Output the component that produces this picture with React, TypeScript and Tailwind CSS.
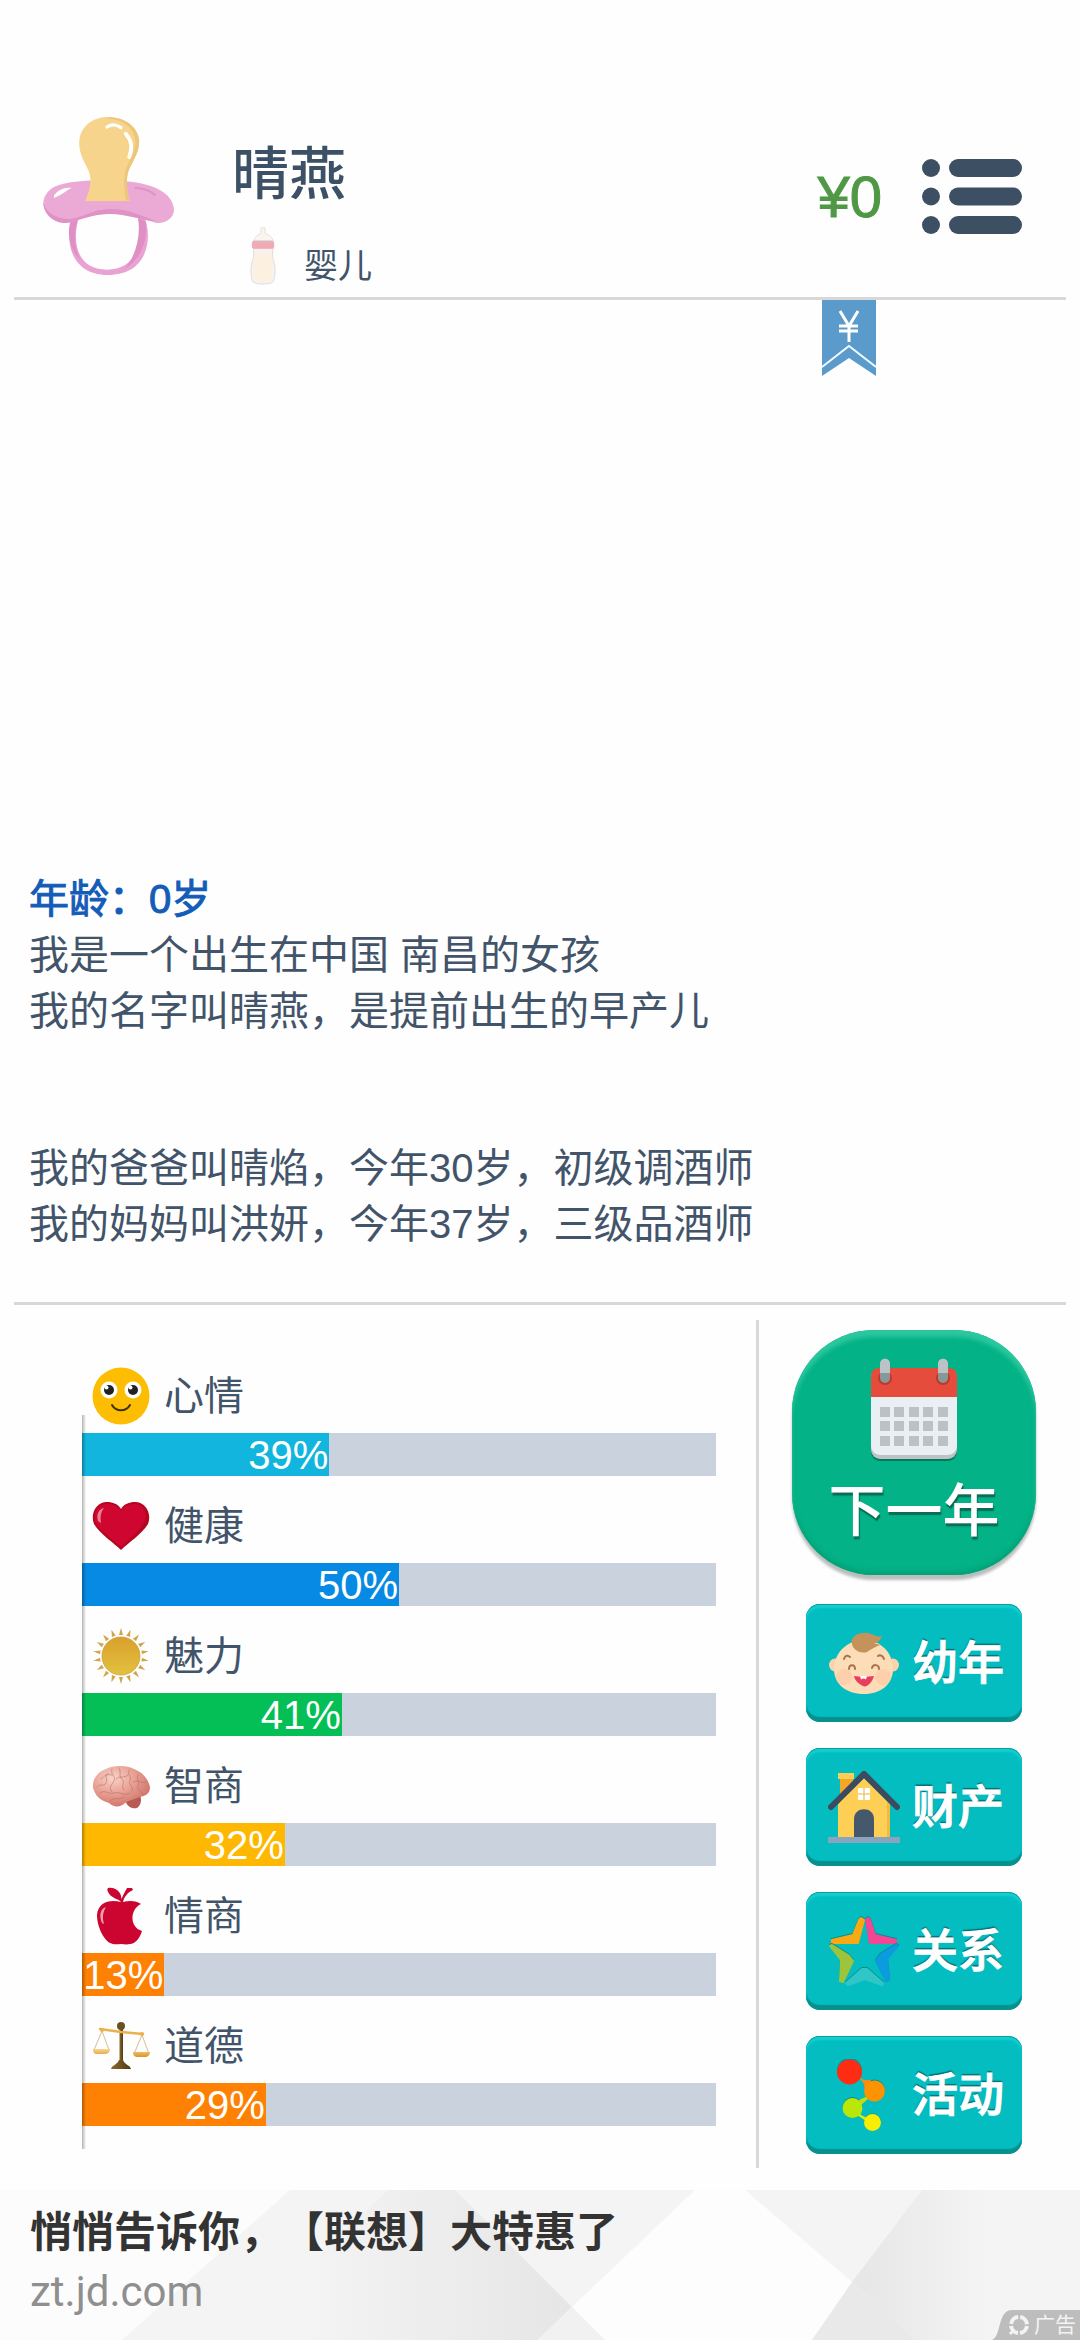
import type { ReactNode } from "react";

function Pacifier() {
  return (
    <svg viewBox="0 0 380 474" preserveAspectRatio="none" className="h-[158px] w-[131px]" aria-hidden="true">
      <path d="M92 296C60 350 70 474 188 474C312 474 318 350 292 296L270 288C296 350 282 458 186 458C90 458 84 360 106 296Z" fill="#e9a3d2" />
      <path d="M84 300C64 350 80 400 110 432C88 390 88 340 104 300Z" fill="#e08fc4" />
      <path d="M298 312C306 370 282 430 236 456C268 420 284 360 276 304Z" fill="#e08fc4" />
      <path d="M60 200C110 186 250 184 310 206C356 220 380 250 380 280C378 308 350 322 326 317C290 308 240 288 190 290C130 292 92 318 60 318C22 314 0 284 1 254C6 222 30 206 60 200Z" fill="#eba9d5" />
      <path d="M1 256C10 292 50 312 90 304C130 294 140 280 190 276C250 274 290 300 330 312C300 314 240 290 190 291C130 292 92 318 60 318C22 314 0 284 1 256Z" fill="#df92c6" />
      <path d="M122 252C140 212 144 180 126 148C110 118 102 90 106 66C112 24 148 0 190 0C240 2 276 30 279 72C280 110 254 140 246 168C240 200 244 226 252 252Z" fill="#f7d48c" />
      <path d="M190 6C236 8 264 34 268 72C268 110 244 138 238 166C232 200 238 228 240 250L252 252C244 226 240 200 246 168C254 140 280 110 279 72C276 30 240 2 190 0Z" fill="#eec679" />
      <path d="M186 30C200 20 216 24 226 32" fill="none" stroke="#fff" strokeWidth="10" strokeLinecap="round" />
      <path d="M240 50C256 68 260 94 250 120" fill="none" stroke="#fff" strokeWidth="11" strokeLinecap="round" />
      <path d="M34 236C40 224 58 214 76 214C64 222 52 232 34 240Z" fill="#fff" stroke="#fff" strokeWidth="4" />
      <path d="M268 212C290 214 314 222 324 234" fill="none" stroke="#df92c6" strokeWidth="6" strokeLinecap="round" />
    </svg>
  );
}

function Bottle() {
  return (
    <svg viewBox="0 0 26 60" className="h-[58px] w-[26px]" aria-hidden="true">
      <path d="M11 1C12-0 14-0 15 1L15.500 7C20 8 23 11 23.500 15H3C4 11 7 8 10.500 7Z" fill="#fbf5ef" stroke="#e3dad6" strokeWidth=".8" />
      <path d="M3 22H23.500C23 28 22 30 24 35C26 42 26 50 24 56C22 60 4 60 2 56C0 50 0 42 2 35C4 30 3.500 28 3 22Z" fill="#f7f2ee" stroke="#dbd5d4" strokeWidth=".8" />
      <path d="M5 28H21C21 33 23 37 22.500 43C22.500 50 22 54 20 55C16 56 9 56 6 55C4 53 4 49 4 43C4 37 5 33 5 28Z" fill="#fcf1df" />
      <rect x="1.500" y="14.500" width="23" height="8" rx="2" fill="#f3a9b3" />
      <rect x="2.500" y="14" width="21" height="2" rx="1" fill="#d9b9bd" />
    </svg>
  );
}

function MenuIcon() {
  return (
    <svg viewBox="0 0 100 75" className="h-[75px] w-[100px]" fill="#3c4f63" aria-hidden="true">
      {[0, 28.500, 57].map((y) => (
        <g key={y}>
          <circle cx="9" cy={y + 9} r="9" />
          <rect x="27" y={y} width="73" height="18" rx="9" />
        </g>
      ))}
    </svg>
  );
}

function Ribbon() {
  return (
    <svg viewBox="0 0 54 76" className="h-[76px] w-[54px]" aria-hidden="true">
      <path d="M0 0H54V76L27 58L0 76Z" fill="#5b9bcb" />
      <path d="M0 67L27 46L54 67" fill="none" stroke="#f2faff" strokeWidth="2" />
      <path d="M18 11L27 26L36 11M27 25V42M17 26H36M17 31H36" fill="none" stroke="#fff" strokeWidth="3" />
    </svg>
  );
}

const iconClass = "size-[58px]";

function Smile() {
  return (
    <svg viewBox="0 0 58 58" className={iconClass} aria-hidden="true">
      <circle cx="29" cy="29" r="28.500" fill="#fdbd02" />
      <circle cx="17" cy="23" r="8.500" fill="#fff" />
      <circle cx="41" cy="23" r="8.500" fill="#fff" />
      <circle cx="17" cy="23" r="5" fill="#222" />
      <circle cx="41" cy="23" r="5" fill="#222" />
      <circle cx="14.500" cy="20.500" r="2" fill="#fff" />
      <circle cx="38.500" cy="20.500" r="2" fill="#fff" />
      <path d="M20 38C24 45 34 45 38 38" fill="none" stroke="#3c3100" strokeWidth="2" strokeLinecap="round" />
    </svg>
  );
}

function Heart() {
  return (
    <svg viewBox="0 0 58 58" className={iconClass} aria-hidden="true">
      <path d="M29 53C22 46 8 37 2 27C-2 17 4 5 15 5C21 5 26 7 29 12C32 7 37 5 43 5C54 5 60 17 56 27C50 37 36 46 29 53Z" fill="#b70520" />
      <path d="M29 50C22 43 9 35 4 26C0 17 6 7 15 7C21 7 26 9 29 14C32 9 37 7 42 7C50 7 55 14 53 23C48 35 36 43 29 50Z" fill="#cf0730" />
      <path d="M6 24C4 17 7 12 12 11C9 15 8 19 9 26Z" fill="#ed7d92" />
    </svg>
  );
}

function Sun() {
  return (
    <svg viewBox="0 0 58 58" className={iconClass} aria-hidden="true">
      <defs>
        <linearGradient id="sun" x1="0" y1="0" x2="0" y2="1">
          <stop offset="0" stopColor="#d9a02c" />
          <stop offset="1" stopColor="#e3c23e" />
        </linearGradient>
      </defs>
      {Array.from({ length: 18 }, (_, i) => (
        <path key={i} d="M29 1L31 8H27Z" fill="#cfa548" transform={`rotate(${i * 20} 29 29)`} />
      ))}
      <circle cx="29" cy="29" r="19" fill="url(#sun)" stroke="#c99b37" strokeWidth=".8" />
    </svg>
  );
}

function Brain() {
  return (
    <svg viewBox="0 0 58 58" className={iconClass} aria-hidden="true">
      <defs>
        <radialGradient id="brain" cx=".35" cy=".3" r=".75">
          <stop offset="0" stopColor="#f8d3c9" />
          <stop offset=".5" stopColor="#e8a194" />
          <stop offset="1" stopColor="#cf7268" />
        </radialGradient>
      </defs>
      <path d="M33 43L48 38C50 43 49 48 45 51C40 52 35 50 33 43Z" fill="#b85a52" />
      <path d="M1 31C0 20 8 14 14 12C20 8 36 8 42 12C50 15 56 21 58 30C58 37 53 39 48 40C43 42 38 43 33 46C29 50 22 51 17 46C12 44 5 43 1 31Z" fill="url(#brain)" />
      <path d="M5 30C8 26 12 30 14 26C16 22 12 19 16 16M20 12C18 18 24 18 22 24C20 28 16 30 20 35M27 11C30 15 26 20 30 22C34 25 28 29 32 33M37 13C35 18 40 19 38 24C36 28 42 29 40 34M46 18C43 22 49 24 46 29C44 33 50 34 51 37M8 36C13 32 17 38 22 36C28 34 32 40 38 36M18 44C22 39 27 44 32 40M24 22C28 18 31 22 36 18M9 22C13 20 12 16 20 18M41 25C45 22 50 27 54 25M38 48L45 42M42 50L47 45" fill="none" stroke="#b9665c" strokeWidth="1" strokeLinecap="round" opacity=".55" />
    </svg>
  );
}

function Apple() {
  return (
    <svg viewBox="0 0 58 58" className={iconClass} aria-hidden="true">
      <path d="M29 15C27 12 22 12 18 8C15 4 15 2 16 1C23 0 29 4 29.500 12C32 6 34 3 35 1L40 1L41 3C36 5 32 10 31 15C38 13 45 14 49 17C38 22 37 40 50 44C48 51 43 57 38 57C34 58 32 57 29 57C25 57 22 58 18 56C12 53 5 40 5 28C6 15 18 12 29 15Z" fill="#cc0530" />
      <path d="M10 36C7 29 8 22 14 20C11 25 10 30 12 37Z" fill="#f0a0ae" />
    </svg>
  );
}

function Scales() {
  return (
    <svg viewBox="0 0 58 58" className={iconClass} aria-hidden="true">
      <defs>
        <linearGradient id="stand" x1="0" y1="0" x2="1" y2="0">
          <stop offset="0" stopColor="#8d6a2c" />
          <stop offset="1" stopColor="#4e3a14" />
        </linearGradient>
        <linearGradient id="pan" x1="0" y1="0" x2="0" y2="1">
          <stop offset="0" stopColor="#f8d692" />
          <stop offset="1" stopColor="#d99422" />
        </linearGradient>
      </defs>
      <path d="M10 14L2 33M10 14L17 33M50 18L42 37M50 18L57 37" stroke="#d8bd93" strokeWidth="1" fill="none" />
      <rect x="27.500" y="11" width="3.500" height="34" fill="url(#stand)" />
      <path d="M8 12L29 15L51 17" stroke="#e9b24e" strokeWidth="2.500" fill="none" strokeLinecap="round" />
      <circle cx="10" cy="13" r="2" fill="#e9b24e" />
      <circle cx="50" cy="17" r="2" fill="#e9b24e" />
      <path d="M1 32H18C18 36 15 37 13 37H5C2 37 1 35 1 32ZM41 35H58C58 39 55 40 53 40H46C43 40 41 39 41 35Z" fill="url(#pan)" />
      <circle cx="29" cy="9" r="4" fill="#6b5020" />
      <path d="M19 52C20 48 25 48 27 43H31C33 48 38 48 39 52Z" fill="url(#stand)" />
    </svg>
  );
}

function Calendar() {
  return (
    <svg viewBox="0 0 88 104" className="h-[104px] w-[88px]" aria-hidden="true">
      <rect x="1" y="13" width="86" height="90" rx="9" fill="#06795d" />
      <rect x="1" y="11" width="86" height="90" rx="9" fill="#bcc2c6" />
      <rect x="1" y="11" width="86" height="86" rx="9" fill="#eaeff3" />
      <path d="M1 39V19C1 13 4 10 10 10H78C84 10 87 13 87 19V39Z" fill="#e64c3c" />
      {[15, 73].map((x) => (
        <g key={x}>
          <circle cx={x} cy="20" r="7" fill="#b93a2e" />
          <rect x={x - 5} y="1" width="10" height="24" rx="5" fill="#8a9799" />
          <path d={`M${x - 5} 15V6C${x - 5} -1 ${x + 5} -1 ${x + 5} 6V15Z`} fill="#bcc3c8" />
        </g>
      ))}
      {[49, 63, 78].map((y) =>
        [10, 24, 39, 53, 68].map((x) => <rect key={`${x}-${y}`} x={x} y={y} width="10" height="10" fill="#bcc1c4" />),
      )}
    </svg>
  );
}

const actionIcon = "size-[72px] shrink-0";

function Baby() {
  return (
    <svg viewBox="0 0 72 72" className={actionIcon} aria-hidden="true">
      <ellipse cx="7" cy="38" rx="6" ry="6.500" fill="#fbd2ab" />
      <ellipse cx="65" cy="38" rx="6" ry="6.500" fill="#fbd2ab" />
      <path d="M36 13C53 13 65 26 65 42C65 57 53 67 36 67C18 67 6 57 6 42C6 26 19 13 36 13Z" fill="#fddcb8" />
      <circle cx="16" cy="50" r="8" fill="#fcc9a4" opacity=".7" />
      <circle cx="55" cy="50" r="8" fill="#fcc9a4" opacity=".7" />
      <path d="M24 17C22 8 32 5 40 6C45 7 49 11 54 9C52 15 48 16 46 16L52 18C47 20 43 22 39 25C32 27 25 23 24 17Z" fill="#c4925b" />
      <path d="M16 32C17 28 20 28 22 30M50 29C52 27 55 29 56 32M21 42C21 37 27 37 27 42M44 41C45 37 51 37 51 42" fill="none" stroke="#a8744e" strokeWidth="2" strokeLinecap="round" />
      <path d="M26 49C31 50 40 50 46 49C44 56 38 61 35 59C31 57 27 54 26 49Z" fill="#e93e5e" />
      <path d="M32 49H39L38 52.500C36 51 35 51 33 52.500Z" fill="#fff" />
    </svg>
  );
}

function House() {
  return (
    <svg viewBox="0 0 72 72" className={actionIcon} aria-hidden="true">
      <path d="M12 4H25V22L12 32Z" fill="#f3a62a" />
      <path d="M10 2H26V8H10Z" fill="#fccf54" />
      <path d="M10 33L36 7L62 33V67H10Z" fill="#fecf55" />
      <path d="M53 24L62 33V67H59V30Z" fill="#f0b940" />
      <path d="M3 36L36 3L69 36" fill="none" stroke="#3c4c60" strokeWidth="6" strokeLinecap="round" />
      <rect x="30" y="17" width="12" height="12" rx="1" fill="#fff" />
      <path d="M36 17V29M30 23H42" stroke="#f1cc76" strokeWidth="1.500" />
      <path d="M26 67V48C26 35 46 35 46 48V67Z" fill="#46586b" />
      <path d="M0 66H72V72H0Z" fill="#8aa4bf" />
    </svg>
  );
}

const starArms = [
  { d: "M31 5L25 20L4 25V28H30L36 5L33 3Z", color: "#f7aa14" },
  { d: "M38 5L42 28H68V25L47 20L42 5L40 3Z", color: "#f34795" },
  { d: "M2 31L13 45L12 66L15 67L25 46L20 40L4 30Z", color: "#9cc43c" },
  { d: "M70 31L59 44L61 65L58 66L48 46L52 40L68 30Z", color: "#0d9be0" },
  { d: "M34 54L18 68L20 70L37 64L54 70L55 68L39 54Z", color: "#2fc6c8" },
];

function Star() {
  return (
    <svg viewBox="0 0 72 72" className={actionIcon} strokeWidth="2" strokeLinejoin="round" aria-hidden="true">
      {starArms.map((arm) => (
        <g key={arm.color}>
          <path d={arm.d} transform="translate(0 -1)" fill="#0f7f80" stroke="#0f7f80" opacity=".8" />
          <path d={arm.d} fill={arm.color} stroke={arm.color} />
        </g>
      ))}
    </svg>
  );
}

function Dots() {
  return (
    <svg viewBox="0 0 72 72" className={actionIcon} aria-hidden="true">
      <g fill="#126f72" opacity=".6">
        <circle cx="21.500" cy="11.500" r="12.500" />
        <circle cx="46.500" cy="31" r="10.500" />
        <circle cx="24.500" cy="48" r="10" />
        <circle cx="44.500" cy="63" r="8.500" />
      </g>
      <path d="M31 18L36 21H43L40 29L37 32L36 25Z" fill="#fb8a12" />
      <path d="M31 41L40 37L41 39L33 46Z" fill="#c8dc08" />
      <path d="M31 51L33 56L39 59L38 62L29 56Z" fill="#d8ee04" />
      <circle cx="21.500" cy="13" r="12.500" fill="#fd2c13" />
      <circle cx="46.500" cy="32" r="10.500" fill="#fd9300" />
      <circle cx="24.500" cy="49" r="10" fill="#b9e709" />
      <circle cx="44.500" cy="63.500" r="8.500" fill="#f8ef00" />
    </svg>
  );
}

type Stat = { id: string; label: string; value: number; color: string; icon: ReactNode };

const stats: Stat[] = [
  { id: "mood", label: "心情", value: 39, color: "bg-[#11b5dd]", icon: <Smile /> },
  { id: "health", label: "健康", value: 50, color: "bg-[#078ae3]", icon: <Heart /> },
  { id: "charm", label: "魅力", value: 41, color: "bg-[#04bf56]", icon: <Sun /> },
  { id: "iq", label: "智商", value: 32, color: "bg-[#ffb801]", icon: <Brain /> },
  { id: "eq", label: "情商", value: 13, color: "bg-[#ff8103]", icon: <Apple /> },
  { id: "moral", label: "道德", value: 29, color: "bg-[#ff8103]", icon: <Scales /> },
];

function StatRow({ stat }: { stat: Stat }) {
  return (
    <div>
      <div className="flex items-center gap-[14px] pl-[10px]">
        {stat.icon}
        <span id={stat.id} className="text-[40px] leading-[58px]">{stat.label}</span>
      </div>
      <div
        role="progressbar"
        aria-labelledby={stat.id}
        aria-valuenow={stat.value}
        aria-valuemin={0}
        aria-valuemax={100}
        className="mt-2 h-[43px] bg-[#c9d2dd]"
      >
        <div
          className={`h-full pr-px text-right text-[40px] leading-[44px] whitespace-nowrap text-white ${stat.color}`}
          style={{ width: `${stat.value}%` }}
        >
          {stat.value}%
        </div>
      </div>
    </div>
  );
}

const actions = [
  { label: "幼年", icon: <Baby /> },
  { label: "财产", icon: <House /> },
  { label: "关系", icon: <Star /> },
  { label: "活动", icon: <Dots /> },
];

function AdBackdrop() {
  return (
    <svg viewBox="0 0 1080 150" preserveAspectRatio="none" className="absolute inset-0 size-full" aria-hidden="true">
      <defs>
        <linearGradient id="shade" x1="0" y1="0" x2="1" y2="0">
          <stop offset="0.2" stopColor="#f4f4f4" />
          <stop offset="1" stopColor="#e6e6e6" />
        </linearGradient>
        <linearGradient id="shadeRight" x1="0" y1="0" x2="1" y2="0">
          <stop offset="0" stopColor="#e6e6e6" />
          <stop offset=".6" stopColor="#f4f4f4" />
        </linearGradient>
      </defs>
      <rect width="1080" height="150" fill="#f4f4f4" />
      <path d="M0 0H290L122 150H0Z" fill="#fcfcfc" />
      <path d="M388 0H455L572 117L538 150H230Z" fill="url(#shade)" />
      <path d="M695 0H745L852 92L915 150H538L572 117Z" fill="#fdfdfd" />
      <path d="M572 117L605 150H538Z" fill="#f1f1f1" />
      <path d="M922 0H1080V150H915L852 92Z" fill="url(#shadeRight)" />
      <path d="M852 92L915 150H812Z" fill="#e9e9e9" />
    </svg>
  );
}

export default function App() {
  return (
    <div className="flex min-h-screen flex-col bg-[#fefefe] font-['Liberation_Sans','Noto_Sans_CJK_SC',sans-serif] text-[#42546a] [text-spacing-trim:space-all]">
      <header className="mx-[14px] flex border-b-[3px] border-[#d8d8d8] pt-[100px]">
        <div className="flex h-[197px] flex-1 items-start pl-[29px]">
          <div className="pt-[17px]">
            <Pacifier />
          </div>
          <div className="pt-8 pl-[58px]">
            <h1 className="text-[57px] leading-[84px] font-medium text-[#3c5066]">晴燕</h1>
            <div className="mt-2 flex items-center gap-7 pl-[18px]">
              <Bottle />
              <span className="pt-5 text-[34px] leading-[44px]">婴儿</span>
            </div>
          </div>
        </div>
        <div className="flex h-[197px] items-center gap-10 pr-[44px]">
          <span className="pb-1 text-[58px] leading-[84px] text-[#4f9845] [-webkit-text-stroke:1px_#4f9845]">¥0</span>
          <button type="button" aria-label="菜单" className="mb-1 cursor-pointer">
            <MenuIcon />
          </button>
        </div>
      </header>

      <main className="relative mx-[14px] flex flex-1 flex-col justify-end border-b-[3px] border-[#d8d8d8] px-[15px] pb-[50px] text-[40px] leading-[56px]">
        <button type="button" aria-label="收入" className="absolute top-0 right-[190px] cursor-pointer">
          <Ribbon />
        </button>
        <h2 className="text-[#135cb8] [-webkit-text-stroke:1px_#135cb8]">年龄：0岁</h2>
        <p>我是一个出生在中国 南昌的女孩</p>
        <p>我的名字叫晴燕，是提前出生的早产儿</p>
        <p className="mt-[101px]">我的爸爸叫晴焰，今年30岁，初级调酒师</p>
        <p>我的妈妈叫洪妍，今年37岁，三级品酒师</p>
      </main>

      <div className="mx-[14px] mt-[15px] mb-[22px] flex">
        <section className="flex-1 pt-[47px] pr-10 pl-[68px]">
          <div className="relative flex flex-col gap-[21px] pb-[23px]">
            {stats.map((s) => (
              <StatRow key={s.id} stat={s} />
            ))}
            <div className="absolute top-12 bottom-0 left-0 w-1 bg-linear-to-r from-black/30 to-transparent" />
          </div>
        </section>
        <nav className="flex w-[310px] flex-col items-center gap-[26px] border-l-[3px] border-[#d8d8d8] pt-[10px] pb-[14px] pl-[3px]">
          <button
            type="button"
            className="mb-[3px] flex h-[245px] w-[244px] cursor-pointer flex-col items-center rounded-[82px] bg-[#03b286] pt-[28px] shadow-[0_5px_3px_#b9bdbc,inset_0_7px_4px_#2cc79f,inset_0_-4px_4px_#04a279]"
          >
            <Calendar />
            <span className="mt-[7px] text-[57px] leading-[84px] font-medium text-white [text-shadow:1px_3px_1px_#0b6b55]">下一年</span>
          </button>
          {actions.map((a) => (
            <button
              key={a.label}
              type="button"
              className="flex h-[118px] w-[216px] cursor-pointer items-center gap-3 rounded-[14px] bg-[#04bdc0] pl-[22px] shadow-[inset_0_1px_0_#0d9c9d,inset_0_4px_2px_#12d0d2,inset_0_-5px_1px_#088f8f]"
            >
              {a.icon}
              <span className="text-[46px] leading-[68px] font-medium whitespace-nowrap text-white [-webkit-text-stroke:1px_white] [text-shadow:0_-2px_1px_#0b6f73]">{a.label}</span>
            </button>
          ))}
        </nav>
      </div>

      <a href="#ad" className="relative block overflow-hidden pt-2 pb-4 pl-[30px]">
        <AdBackdrop />
        <div className="relative">
          <div className="font-['Noto_Sans_CJK_SC',sans-serif] text-[42px] leading-[62px] font-bold text-[#333]">悄悄告诉你，【联想】大特惠了</div>
          <div className="font-[Roboto,sans-serif] text-[42px] leading-[64px] text-[#8f8f8f]">zt.jd.com</div>
        </div>
        <div className="absolute right-0 bottom-0 flex h-[30px] items-center">
          <svg viewBox="0 0 88 30" className="absolute inset-0 size-full" preserveAspectRatio="none" aria-hidden="true">
            <path d="M0 30C10 26 5 0 20 0H88V30Z" fill="#bdbdbd" />
          </svg>
          <div className="relative flex items-center gap-1 pr-1 pl-4">
            <svg viewBox="0 0 22 22" className="size-[22px]" fill="none" stroke="#f3f3f3" strokeWidth="4" aria-hidden="true">
              <circle cx="11" cy="11" r="8" strokeDasharray="10.500 2.066" strokeDashoffset="-1" />
              <path d="M2 20L6 16" strokeWidth="3" />
            </svg>
            <span className="text-[21px] leading-[30px] text-[#f3f3f3]">广告</span>
          </div>
        </div>
      </a>
    </div>
  );
}
